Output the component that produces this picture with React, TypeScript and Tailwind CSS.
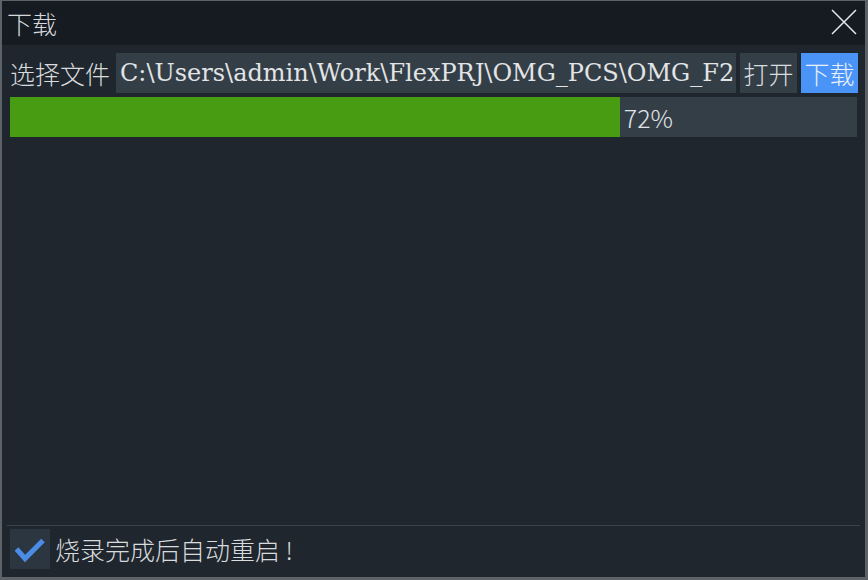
export default function App() {
  const progress = 72

  return (
    <div className="w-[868px] h-[580px] bg-[#5d6269] pt-px pl-[2px] pr-[3px] pb-[3px] overflow-hidden">
      <div
        className="w-full h-full flex flex-col bg-[#1f262d] text-[#d9dcdf] font-light"
        style={{ fontFamily: '"Noto Sans CJK SC", "Noto Sans", sans-serif' }}
      >
        {/* Title bar */}
        <div className="h-[44px] shrink-0 flex items-center justify-between bg-[#161b22] pl-[5px] pr-[8px]">
          <span className="text-[25px] leading-none text-[#d5d8db]">下载</span>
          <svg width="26" height="26" viewBox="0 0 26 26" className="mt-[-2px]">
            <path d="M1 1 L25 25 M25 1 L1 25" stroke="#e6e8ea" strokeWidth="1.5" fill="none" />
          </svg>
        </div>

        {/* Body */}
        <div className="flex-1 flex flex-col pt-[8px] pl-[8px] pr-[7px]">
          <div className="flex items-center h-[40px]">
            <span className="text-[25px] leading-none w-[100px] mr-[6px] whitespace-nowrap">选择文件</span>
            <div className="flex-1 min-w-0 h-full bg-[#333e47] flex items-center pl-[4px] overflow-hidden">
              <span
                className="text-[24px] leading-none whitespace-nowrap text-[#e2e4e6] font-normal"
                style={{ fontFamily: '"DejaVu Serif", serif' }}
              >
                C:\Users\admin\Work\FlexPRJ\OMG_PCS\OMG_F2
              </span>
            </div>
            <button className="ml-[4px] w-[57px] h-full bg-[#333e47] text-[25px] leading-none text-[#d9dcdf] flex items-center justify-center">
              打开
            </button>
            <button className="ml-[4px] w-[57px] h-full bg-[#4a94f7] text-[25px] leading-none text-[#e8f0fb] flex items-center justify-center">
              下载
            </button>
          </div>

          <div className="mt-[4px] h-[40px] bg-[#333e47] flex items-center mr-px">
            <div className="h-full bg-[#489c11]" style={{ width: `${progress}%` }} />
            <span className="ml-[4px] text-[25px] leading-none text-[#e0e3e6]">{progress}%</span>
          </div>

          <div className="flex-1" />
        </div>

        {/* Footer */}
        <div className="mx-[5px] h-px bg-[#3a424b]" />
        <div className="flex items-center h-[40px] mt-[3px] mb-[8px] pl-[8px]">
          <div className="w-[40px] h-[40px] bg-[#2c3640] flex items-center justify-center">
            <svg width="40" height="40" viewBox="0 0 40 40">
              <path d="M6.5 20 L15 29.5 L33 11.5" stroke="#4a8ce6" strokeWidth="5" fill="none" strokeLinejoin="miter" />
            </svg>
          </div>
          <span className="ml-[5px] text-[25px] leading-none whitespace-nowrap">烧录完成后自动重启 !</span>
        </div>
      </div>
    </div>
  )
}
